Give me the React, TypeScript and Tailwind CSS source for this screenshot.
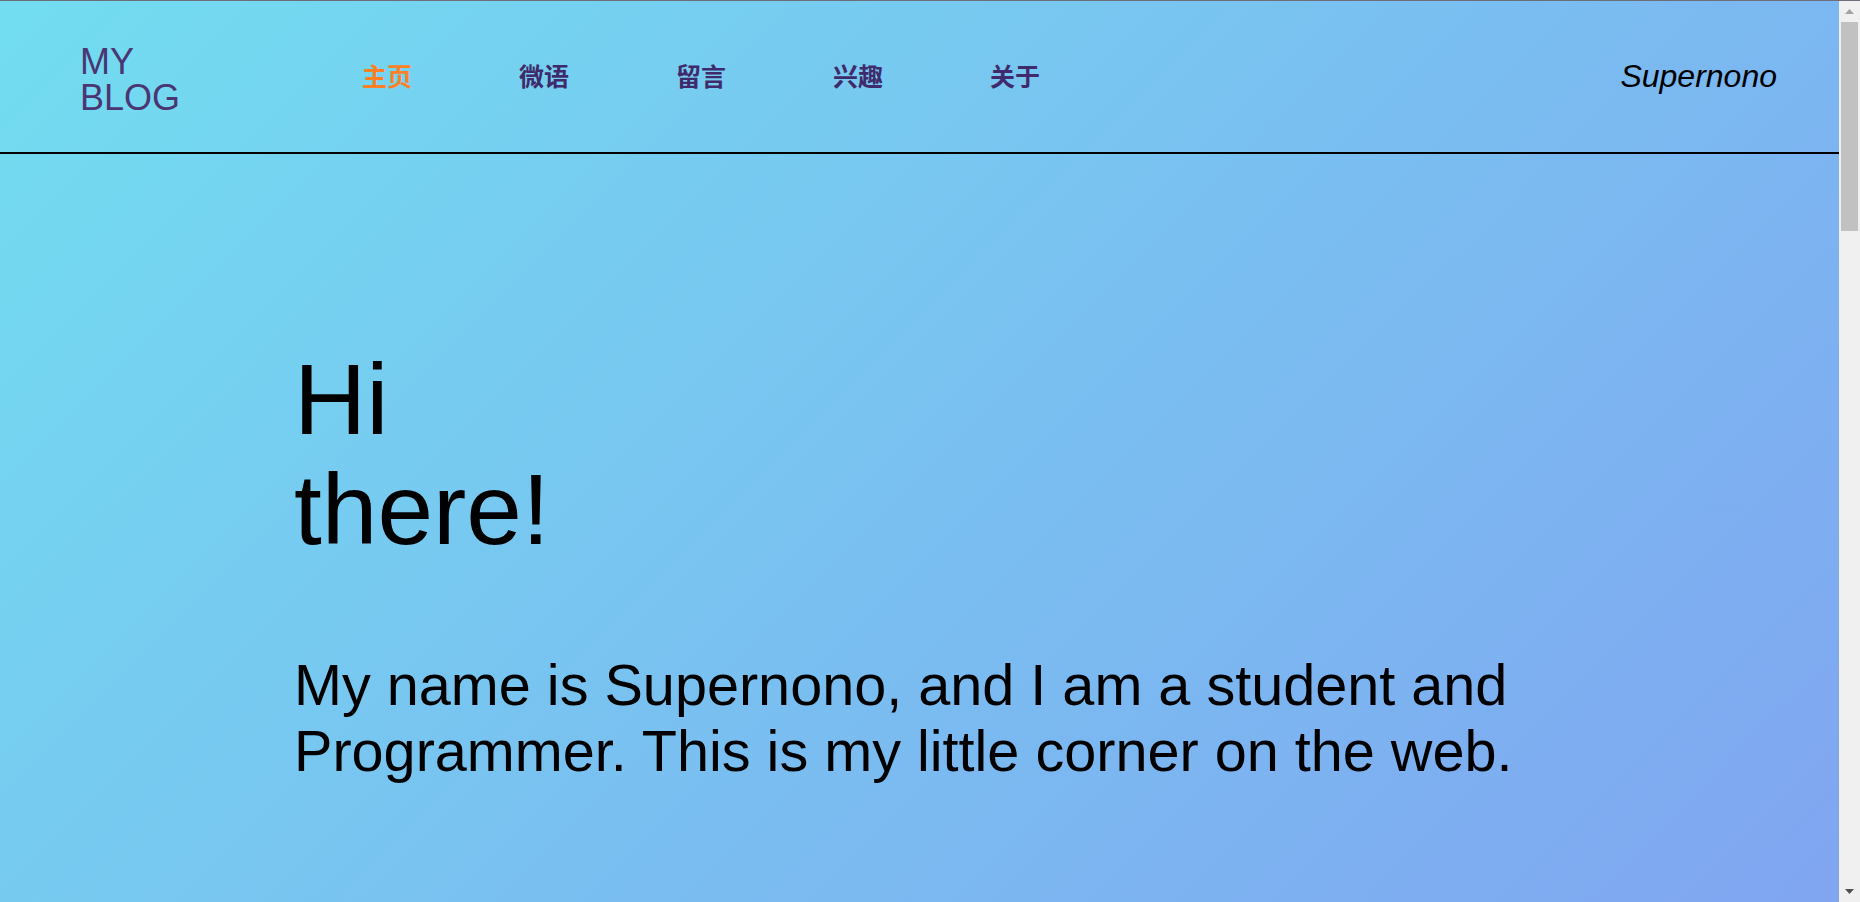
const navItems = ["主页", "微语", "留言", "兴趣", "关于"];

const ScrollArrow = ({ up, color }: { up?: boolean; color: string }) => (
  <div className="h-[21px] flex items-center justify-center">
    <svg width="9" height="5" viewBox="0 0 9 5">
      <path d={up ? "M4.5 0L9 5H0Z" : "M0 0H9L4.5 5Z"} fill={color} />
    </svg>
  </div>
);

const App = () => {
  return (
    <div className="h-[902px] w-full flex flex-col overflow-hidden border-t border-[#6e6e78] font-['Liberation_Sans',Arial,sans-serif]">
      <div className="flex flex-1 min-h-0">
        {/* Page */}
        <div className="flex-1 flex flex-col bg-[linear-gradient(135deg,#72ddf0,#80a5f1)]">
          {/* Header */}
          <header className="h-[153px] flex items-center border-b-2 border-black pl-[80px] pr-[62px]">
            <div className="w-[282px] text-[36px] leading-[36px] text-[#4a3672] pt-[6px]">
              <div>MY</div>
              <div>BLOG</div>
            </div>
            <nav className="flex items-center gap-[107px] font-['Noto_Sans_CJK_SC',sans-serif] font-bold text-[25px] text-[#3f2b6b] pb-[2px]">
              {navItems.map((item, i) => (
                <a key={item} className={i === 0 ? "text-[#ff7f24]" : ""}>
                  {item}
                </a>
              ))}
            </nav>
            <div className="ml-auto italic text-[32px] text-black pb-[2px]">Supernono</div>
          </header>

          {/* Intro */}
          <main className="pl-[294px] pt-[190px] text-black">
            <h1 className="text-[100px] leading-[110px]">
              Hi
              <br />
              there!
            </h1>
            <p className="mt-[88px] max-w-[1240px] text-[57.6px] leading-[66px]">
              My name is Supernono, and I am a student and Programmer. This is my little corner on the web.
            </p>
          </main>
        </div>

        {/* Scrollbar */}
        <div className="w-[21px] bg-[#f0f0f0] flex flex-col">
          <ScrollArrow up color="#a3a3a3" />
          <div className="h-[209px] mx-[2px] bg-[#c1c1c1]" />
          <div className="flex-1" />
          <ScrollArrow color="#505050" />
        </div>
      </div>
    </div>
  );
};

export default App;
